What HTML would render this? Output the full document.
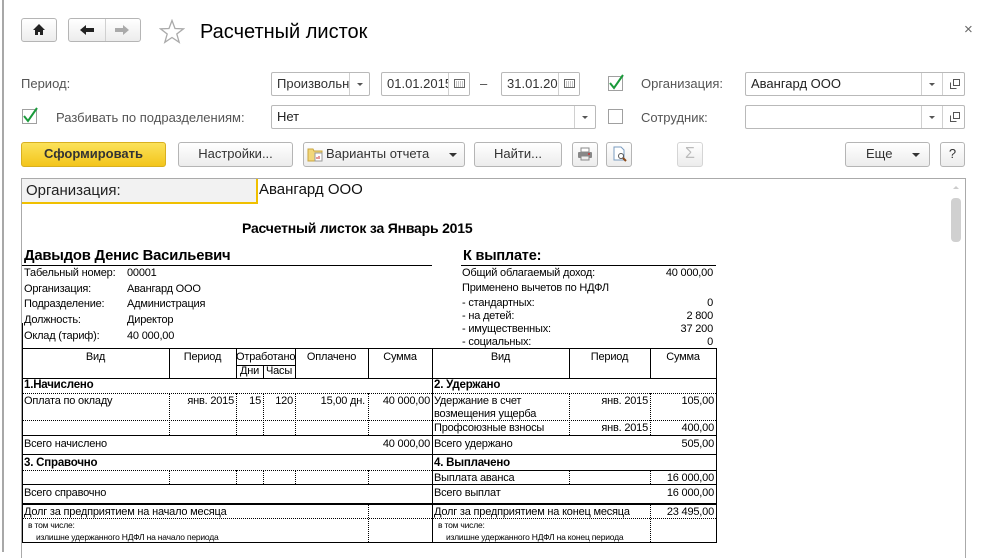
<!DOCTYPE html>
<html><head><meta charset="utf-8"><style>
*{margin:0;padding:0;box-sizing:border-box}
body{width:986px;height:552px;overflow:hidden;background:#fff;font-family:"Liberation Sans",Arial,sans-serif;position:relative;color:#333}
.a{position:absolute}
.btn{position:absolute;border:1px solid #b5b5b5;border-radius:3px;background:linear-gradient(#fff,#ececec);font-size:13px;color:#333;text-align:center;line-height:22px}
.fld{position:absolute;border:1px solid #b9b9b9;border-radius:2px;background:#fff;font-size:13px;color:#333;line-height:22px;padding-left:5px;white-space:nowrap;overflow:hidden}
.lbl{position:absolute;font-size:13px;color:#555}
.sp{position:absolute;top:0;bottom:0;border-left:1px solid #d0d0d0}
.dd{position:absolute;width:0;height:0;border-left:3px solid transparent;border-right:3px solid transparent;border-top:3px solid #555}
.cb{position:absolute;width:15px;height:15px;border:1px solid #a0a0a0;background:#fff}
.r{position:absolute;font-size:11px;color:#000;white-space:nowrap;line-height:13px;letter-spacing:-0.2px}
.h{position:absolute;height:0;border-top:1px solid #000}
.hd{position:absolute;height:0;border-top:1px dotted #000}
.v{position:absolute;width:0;border-left:1px solid #000}
.vd{position:absolute;width:0;border-left:1px dotted #000}
.b{font-weight:bold;font-size:12px}
.rt{text-align:right}
.c{text-align:center}
</style></head><body>
<div class="a" style="left:2px;top:0;width:2px;height:552px;background:#a8a8a8"></div>

<div class="btn" style="left:21px;top:18px;width:36px;height:24px"></div>
<svg class="a" style="left:32px;top:23px" width="14" height="13" viewBox="0 0 14 13"><path d="M7 1 L1 7 H3 V12 H6 V9 H8 V12 H11 V7 H13 Z" fill="#222"/></svg>
<div class="btn" style="left:68px;top:18px;width:73px;height:24px"></div>
<div class="a" style="left:105px;top:19px;height:22px;border-left:1px solid #d0d0d0"></div>
<svg class="a" style="left:79px;top:24px" width="16" height="12"><path d="M1 6 L7 1 V4 H15 V8 H7 V11 Z" fill="#222"/></svg>
<svg class="a" style="left:114px;top:24px" width="16" height="12"><path d="M15 6 L9 1 V4 H1 V8 H9 V11 Z" fill="#aaa"/></svg>
<svg class="a" style="left:159px;top:19px" width="26" height="25" viewBox="0 0 26 25"><path d="M13 1.5 L16 9.5 L24.5 9.8 L17.8 15 L20.2 23.3 L13 18.5 L5.8 23.3 L8.2 15 L1.5 9.8 L10 9.5 Z" fill="none" stroke="#aaa" stroke-width="1.3"/></svg>
<div class="a" style="left:200px;top:21px;font-size:20px;color:#000">Расчетный листок</div>
<div class="a" style="left:964px;top:21px;font-size:15px;color:#666">×</div>

<div class="lbl" style="left:21px;top:76px">Период:</div>
<div class="fld" style="left:271px;top:72px;width:99px;height:24px">Произвольн<div class="sp" style="left:77px"></div><div class="dd" style="left:85px;top:10px"></div></div>
<div class="fld" style="left:381px;top:72px;width:89px;height:24px">01.01.2015<div class="sp" style="left:66px;background:#fff;width:22px"></div></div>
<svg class="a" style="left:454px;top:79px" width="11" height="9"><rect x=".5" y=".5" width="10" height="8" fill="none" stroke="#666"/><path d="M2 3h7M2 5h7M2 7h7" stroke="#888" stroke-dasharray="1 1"/></svg>
<div class="a" style="left:480px;top:76px;font-size:13px;color:#444">–</div>
<div class="fld" style="left:501px;top:72px;width:79px;height:24px">31.01.20<div class="sp" style="left:56px;background:#fff;width:22px"></div></div>
<svg class="a" style="left:564px;top:79px" width="11" height="9"><rect x=".5" y=".5" width="10" height="8" fill="none" stroke="#666"/><path d="M2 3h7M2 5h7M2 7h7" stroke="#888" stroke-dasharray="1 1"/></svg>
<div class="cb" style="left:608px;top:76px"></div>
<svg class="a" style="left:607px;top:72px" width="18" height="19"><path d="M3 11 L7 16 L16 3" fill="none" stroke="#1a9a3a" stroke-width="2"/></svg>
<div class="lbl" style="left:641px;top:76px">Организация:</div>
<div class="fld" style="left:745px;top:72px;width:220px;height:24px;color:#222">Авангард ООО<div class="sp" style="left:175px"></div><div class="dd" style="left:183px;top:10px"></div><div class="sp" style="left:196px"></div></div>
<svg class="a" style="left:950px;top:79px" width="10" height="10"><path d="M3.5 .5h6v6h-6zM.5 3.5v6h6" fill="none" stroke="#555"/></svg>

<div class="cb" style="left:22px;top:109px"></div>
<svg class="a" style="left:21px;top:105px" width="18" height="19"><path d="M3 11 L7 16 L16 3" fill="none" stroke="#1a9a3a" stroke-width="2"/></svg>
<div class="lbl" style="left:56px;top:110px">Разбивать по подразделениям:</div>
<div class="fld" style="left:271px;top:105px;width:325px;height:24px;color:#222">Нет<div class="sp" style="left:302px"></div><div class="dd" style="left:310px;top:10px"></div></div>
<div class="cb" style="left:608px;top:109px"></div>
<div class="lbl" style="left:641px;top:110px">Сотрудник:</div>
<div class="fld" style="left:745px;top:105px;width:220px;height:24px"><div class="sp" style="left:175px"></div><div class="dd" style="left:183px;top:10px"></div><div class="sp" style="left:196px"></div></div>
<svg class="a" style="left:950px;top:112px" width="10" height="10"><path d="M3.5 .5h6v6h-6zM.5 3.5v6h6" fill="none" stroke="#555"/></svg>

<div class="btn" style="left:21px;top:142px;width:145px;height:25px;background:linear-gradient(#fbe25a,#f3c51b);border-color:#d8b020;font-weight:bold;color:#333">Сформировать</div>
<div class="btn" style="left:178px;top:142px;width:115px;height:25px">Настройки...</div>
<div class="btn" style="left:303px;top:142px;width:162px;height:25px;text-align:left;padding-left:22px">Варианты отчета<div class="dd" style="left:145px;top:10px;border-width:4px 4px 0;border-top-color:#333"></div></div>
<svg class="a" style="left:307px;top:147px" width="17" height="15"><path d="M1 2h5l1 2h8v10H1z" fill="#f2d77a" stroke="#c9a640"/><rect x="8" y="6" width="7" height="8" fill="#fff" stroke="#999"/><path d="M10 12v-2M12 12v-3" stroke="#c33"/></svg>
<div class="btn" style="left:474px;top:142px;width:88px;height:25px">Найти...</div>
<div class="btn" style="left:572px;top:142px;width:26px;height:25px"></div>
<svg class="a" style="left:577px;top:147px" width="16" height="14"><rect x="4" y="1" width="8" height="4" fill="#fff" stroke="#888"/><rect x="1" y="5" width="14" height="6" rx="1" fill="#888"/><rect x="4" y="9" width="8" height="4" fill="#eee" stroke="#888"/><circle cx="12" cy="7" r="1" fill="#c33"/></svg>
<div class="btn" style="left:606px;top:142px;width:26px;height:25px"></div>
<svg class="a" style="left:612px;top:146px" width="16" height="16"><path d="M2 1h7l3 3v10H2z" fill="#fff" stroke="#7a9cc0"/><circle cx="9" cy="10" r="2.5" fill="none" stroke="#555"/><path d="M11 12l3 3" stroke="#8b4a1a" stroke-width="2"/></svg>
<div class="btn" style="left:677px;top:142px;width:26px;height:25px;color:#bbb;font-size:16px;border-color:#d5d5d5">Σ</div>
<div class="btn" style="left:845px;top:142px;width:85px;height:25px;text-align:left;padding-left:20px">Еще<div class="dd" style="left:66px;top:10px;border-width:4px 4px 0;border-top-color:#333"></div></div>
<div class="btn" style="left:940px;top:142px;width:25px;height:25px">?</div>

<div class="a" style="left:21px;top:178px;width:945px;height:380px;border:1px solid #aaa;border-bottom:none"></div>
<div class="a" style="left:22px;top:179px;width:236px;height:25px;background:#f2f2f2;border-bottom:2px solid #f0c000;border-right:2px solid #f0c000;font-size:15px;color:#222;padding:3px 0 0 4px">Организация:</div>
<div class="a" style="left:259px;top:181px;font-size:15px;color:#111">Авангард ООО</div>
<div class="a" style="left:951px;top:198px;width:10px;height:44px;background:#d0d0d0;border-radius:4px"></div>
<div class="a" style="left:953px;top:186px;width:0;height:0;border-left:3px solid transparent;border-right:3px solid transparent;border-bottom:3px solid #ccc"></div>

<div class="r b" style="left:242px;top:222px;font-size:14px">Расчетный листок за Январь 2015</div>
<div class="r b" style="left:24px;top:250px;font-size:14.8px">Давыдов Денис Васильевич</div>
<div class="h" style="left:22px;top:265px;width:410px"></div>
<div class="r b" style="left:463px;top:250px;font-size:14.5px">К выплате:</div>
<div class="h" style="left:461px;top:265px;width:255px"></div>

<div class="r" style="left:24px;top:267px">Табельный номер:</div><div class="r" style="left:127px;top:267px">00001</div>
<div class="r" style="left:24px;top:283px">Организация:</div><div class="r" style="left:127px;top:283px">Авангард ООО</div>
<div class="r" style="left:24px;top:298px">Подразделение:</div><div class="r" style="left:127px;top:298px">Администрация</div>
<div class="r" style="left:24px;top:314px">Должность:</div><div class="r" style="left:127px;top:314px">Директор</div>
<div class="r" style="left:24px;top:330px">Оклад (тариф):</div><div class="r" style="left:127px;top:330px">40 000,00</div>

<div class="r" style="left:462px;top:267px">Общий облагаемый доход:</div><div class="r rt" style="left:600px;width:113px;top:267px">40 000,00</div>
<div class="r" style="left:462px;top:282px">Применено вычетов по НДФЛ</div>
<div class="r" style="left:462px;top:297px">- стандартных:</div><div class="r rt" style="left:600px;width:113px;top:297px">0</div>
<div class="r" style="left:462px;top:310px">- на детей:</div><div class="r rt" style="left:600px;width:113px;top:310px">2 800</div>
<div class="r" style="left:462px;top:323px">- имущественных:</div><div class="r rt" style="left:600px;width:113px;top:323px">37 200</div>
<div class="r" style="left:462px;top:336px">- социальных:</div><div class="r rt" style="left:600px;width:113px;top:336px">0</div>

<div class="h" style="left:22px;top:348px;width:694px"></div>
<div class="h" style="left:22px;top:378px;width:694px"></div>
<div class="h" style="left:236px;top:365px;width:59px"></div>
<div class="v" style="left:22px;top:323px;height:220px"></div>
<div class="v" style="left:716px;top:348px;height:195px"></div>
<div class="v" style="left:432px;top:348px;height:195px"></div>
<div class="v" style="left:169px;top:348px;height:30px"></div>
<div class="v" style="left:236px;top:348px;height:30px"></div>
<div class="v" style="left:263px;top:365px;height:13px"></div>
<div class="v" style="left:295px;top:348px;height:30px"></div>
<div class="v" style="left:368px;top:348px;height:30px"></div>
<div class="v" style="left:569px;top:348px;height:30px"></div>
<div class="v" style="left:650px;top:348px;height:30px"></div>

<div class="r c" style="left:22px;width:147px;top:351px">Вид</div>
<div class="r c" style="left:169px;width:67px;top:351px">Период</div>
<div class="r c" style="left:236px;width:59px;top:351px">Отработано</div>
<div class="r c" style="left:236px;width:27px;top:365px">Дни</div>
<div class="r c" style="left:263px;width:32px;top:365px">Часы</div>
<div class="r c" style="left:295px;width:73px;top:351px">Оплачено</div>
<div class="r c" style="left:368px;width:64px;top:351px">Сумма</div>
<div class="r c" style="left:432px;width:137px;top:351px">Вид</div>
<div class="r c" style="left:569px;width:81px;top:351px">Период</div>
<div class="r c" style="left:650px;width:66px;top:351px">Сумма</div>

<div class="r b" style="left:24px;top:379px;font-size:11.5px">1.Начислено</div>
<div class="r b" style="left:434px;top:379px;font-size:11.5px">2. Удержано</div>
<div class="hd" style="left:22px;top:393px;width:694px"></div>
<div class="hd" style="left:22px;top:420px;width:694px"></div>
<div class="h" style="left:22px;top:435px;width:694px"></div>
<div class="vd" style="left:169px;top:393px;height:42px"></div>
<div class="vd" style="left:236px;top:393px;height:42px"></div>
<div class="vd" style="left:263px;top:393px;height:42px"></div>
<div class="vd" style="left:295px;top:393px;height:42px"></div>
<div class="vd" style="left:368px;top:393px;height:42px"></div>
<div class="vd" style="left:569px;top:393px;height:42px"></div>
<div class="vd" style="left:650px;top:393px;height:42px"></div>
<div class="r" style="left:24px;top:395px">Оплата по окладу</div>
<div class="r rt" style="left:169px;width:65px;top:395px">янв. 2015</div>
<div class="r rt" style="left:236px;width:25px;top:395px">15</div>
<div class="r rt" style="left:263px;width:30px;top:395px">120</div>
<div class="r rt" style="left:295px;width:70px;top:395px">15,00 дн.</div>
<div class="r rt" style="left:368px;width:62px;top:395px">40 000,00</div>
<div class="r" style="left:434px;top:395px;line-height:13px">Удержание в счет<br>возмещения ущерба</div>
<div class="r rt" style="left:569px;width:79px;top:395px">янв. 2015</div>
<div class="r rt" style="left:650px;width:64px;top:395px">105,00</div>
<div class="r" style="left:434px;top:422px">Профсоюзные взносы</div>
<div class="r rt" style="left:569px;width:79px;top:422px">янв. 2015</div>
<div class="r rt" style="left:650px;width:64px;top:422px">400,00</div>

<div class="r" style="left:24px;top:438px">Всего начислено</div>
<div class="r rt" style="left:368px;width:62px;top:438px">40 000,00</div>
<div class="r" style="left:434px;top:438px">Всего удержано</div>
<div class="r rt" style="left:650px;width:64px;top:438px">505,00</div>
<div class="h" style="left:22px;top:454px;width:694px"></div>
<div class="r b" style="left:24px;top:457px;font-size:11.5px">3. Справочно</div>
<div class="r b" style="left:434px;top:457px;font-size:11.5px">4. Выплачено</div>
<div class="hd" style="left:22px;top:470px;width:410px"></div>
<div class="h" style="left:432px;top:470px;width:284px"></div>
<div class="vd" style="left:169px;top:470px;height:14px"></div>
<div class="vd" style="left:236px;top:470px;height:14px"></div>
<div class="vd" style="left:263px;top:470px;height:14px"></div>
<div class="vd" style="left:295px;top:470px;height:14px"></div>
<div class="vd" style="left:368px;top:470px;height:14px"></div>
<div class="vd" style="left:569px;top:470px;height:14px"></div>
<div class="vd" style="left:650px;top:470px;height:14px"></div>
<div class="r" style="left:434px;top:472px">Выплата аванса</div>
<div class="r rt" style="left:650px;width:64px;top:472px">16 000,00</div>
<div class="h" style="left:22px;top:484px;width:694px"></div>
<div class="r" style="left:24px;top:487px">Всего справочно</div>
<div class="r" style="left:434px;top:487px">Всего выплат</div>
<div class="r rt" style="left:650px;width:64px;top:487px">16 000,00</div>
<div class="a" style="left:22px;top:503px;width:694px;height:2px;background:#000"></div>
<div class="vd" style="left:368px;top:505px;height:37px"></div>
<div class="vd" style="left:650px;top:505px;height:37px"></div>
<div class="r" style="left:24px;top:506px">Долг за предприятием на начало месяца</div>
<div class="r" style="left:434px;top:506px">Долг за предприятием на конец месяца</div>
<div class="r rt" style="left:650px;width:64px;top:506px">23 495,00</div>
<div class="hd" style="left:22px;top:518px;width:694px"></div>
<div class="r" style="left:28px;top:519px;font-size:8.5px">в том числе:</div>
<div class="r" style="left:36px;top:531px;font-size:8.5px">излишне удержанного НДФЛ на начало периода</div>
<div class="r" style="left:438px;top:519px;font-size:8.5px">в том числе:</div>
<div class="r" style="left:446px;top:531px;font-size:8.5px">излишне удержанного НДФЛ на конец периода</div>
<div class="h" style="left:22px;top:542px;width:694px"></div>
</body></html>
